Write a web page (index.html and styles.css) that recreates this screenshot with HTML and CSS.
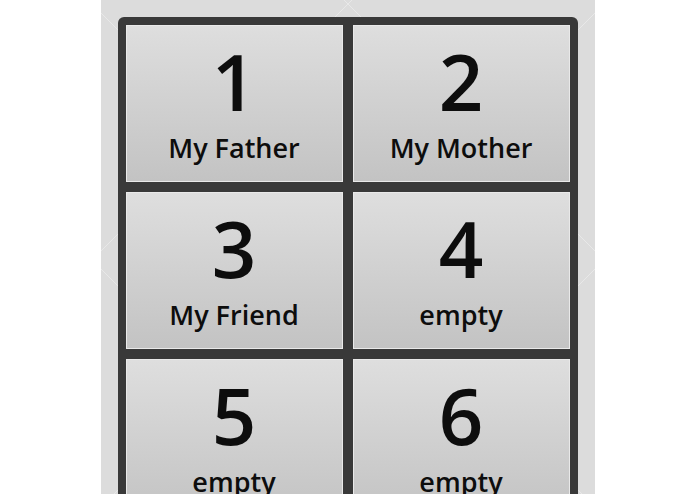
FILE: index.html
```html
<!DOCTYPE html>
<html lang="en">
<head>
    <meta charset="UTF-8">
    <meta name="viewport" content="width=device-width, initial-scale=1.0">
    <title>Speed Dial</title>
    <link rel="stylesheet" href="styles.css">
</head>
<body>
    <div class="panel">
        <div class="dial-grid">
            <button class="dial-key"><span class="key-num">1</span><span class="key-name">My Father</span></button>
            <button class="dial-key"><span class="key-num">2</span><span class="key-name">My Mother</span></button>
            <button class="dial-key"><span class="key-num">3</span><span class="key-name">My Friend</span></button>
            <button class="dial-key"><span class="key-num">4</span><span class="key-name">empty</span></button>
            <button class="dial-key"><span class="key-num">5</span><span class="key-name">empty</span></button>
            <button class="dial-key"><span class="key-num">6</span><span class="key-name">empty</span></button>
        </div>
    </div>
</body>
</html>
```

FILE: styles.css
```css
body {
    background: white;
    margin: 0;
    padding: 0;
    font-family: "Open Sans", "Noto Sans", sans-serif;
}
.panel {
    width: 494px;
    min-height: 100vh;
    margin: 0 auto;
    padding: 17px 17px 0;
    box-sizing: border-box;
    background-color: #dcdcdc;
    background-image:
        repeating-linear-gradient(45deg, transparent 0, transparent 180px, rgba(255, 255, 255, 0.35) 180px, rgba(255, 255, 255, 0.35) 181px),
        repeating-linear-gradient(-45deg, transparent 0, transparent 180px, rgba(255, 255, 255, 0.35) 180px, rgba(255, 255, 255, 0.35) 181px);
}
.dial-grid {
    display: grid;
    grid-template-columns: 1fr 1fr;
    gap: 10px;
    padding: 8px;
    background: #393939;
    border-radius: 6px 6px 0 0;
}
.dial-key {
    height: 157px;
    display: flex;
    flex-direction: column;
    align-items: center;
    padding: 0;
    border: 1px solid #e9e9e9;
    background: linear-gradient(to bottom, #dedede, #c3c3c3);
    font-family: inherit;
    font-weight: 600;
    color: #0d0d0d;
    cursor: pointer;
}
.key-num {
    font-size: 78px;
    line-height: 1;
    margin-top: 16px;
}
.key-name {
    font-size: 27px;
    line-height: 1;
    margin-top: 14px;
}
```
